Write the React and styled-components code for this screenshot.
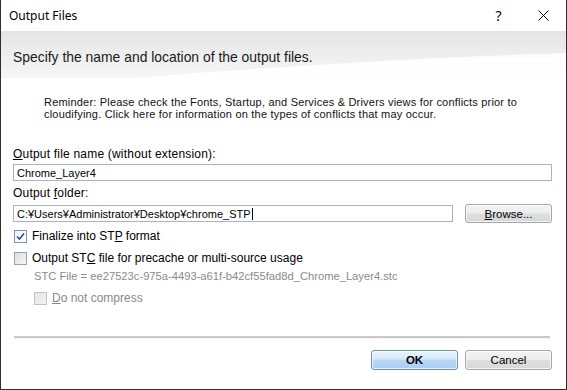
import styled, { createGlobalStyle } from "styled-components";

const Global = createGlobalStyle`
  html, body {
    margin: 0;
    padding: 0;
    background: #ffffff;
  }
  body {
    font-family: "Liberation Sans", Arial, sans-serif;
    font-size: 12px;
    color: #000;
  }
`;

const Window = styled.div`
  width: 567px;
  height: 390px;
  box-sizing: border-box;
  border: 1px solid #2e2e2e;
  border-top: none;
  background: #fff;
  display: flex;
  flex-direction: column;
`;

const TitleBar = styled.div`
  height: 31px;
  display: flex;
  align-items: center;
  padding-left: 8px;
  background: #fff;
  font-family: "Noto Sans", "Open Sans", sans-serif;
  font-size: 12px;
  color: #000;
`;

const Title = styled.div`
  flex: 1;
`;

const TitleButton = styled.div`
  width: 45px;
  height: 31px;
  display: flex;
  align-items: center;
  justify-content: center;
  font-size: 14px;
`;

const Header = styled.div`
  height: 47px;
  box-sizing: border-box;
  padding: 4px 0 0 12px;
  display: flex;
  align-items: center;
  position: relative;
  overflow: hidden;
  background: linear-gradient(to bottom, #e4e4e4 0%, #ececec 40%, #f6f6f6 100%);
  font-family: "Liberation Sans", Arial, sans-serif;
  font-size: 13.9px;
  color: #1a1a1a;
`;

const Swoosh = styled.svg`
  position: absolute;
  left: 0;
  top: 0;
  width: 565px;
  height: 70px;
`;

const HeaderText = styled.span`
  position: relative;
`;

const Body = styled.div`
  flex: 1;
  display: flex;
  flex-direction: column;
  padding: 0 14px 0 12px;
`;

const Reminder = styled.div`
  margin: 18px 0 0 31px;
  width: 500px;
  font-size: 11px;
  line-height: 12px;
  color: #111;
  letter-spacing: 0.2px;
`;

const Label = styled.div`
  margin-top: ${(p) => p.$top || 0}px;
  line-height: 14px;
  letter-spacing: 0.2px;
  color: #000;
`;

const Key = styled.span`
  text-decoration: underline;
`;

const Row = styled.div`
  display: flex;
  align-items: center;
  gap: 12px;
  margin-top: ${(p) => p.$top || 0}px;
`;

const TextInput = styled.div`
  flex: ${(p) => (p.$grow ? "1 1 auto" : "none")};
  height: 17px;
  box-sizing: border-box;
  border: 1px solid #a7b4c8;
  padding: 0 3px;
  display: flex;
  align-items: center;
  font-size: 11px;
  color: #000;
  background: #fff;
  margin-top: ${(p) => p.$top || 0}px;
`;

const Caret = styled.span`
  display: inline-block;
  width: 1px;
  height: 12px;
  background: #000;
  margin-left: 1px;
`;

const Button = styled.div`
  width: ${(p) => p.$width || 87}px;
  height: ${(p) => p.$height || 20}px;
  flex: none;
  box-sizing: border-box;
  border: 1px solid ${(p) => (p.$primary ? "#6f8fb7" : "#a6a6a6")};
  border-radius: 3px;
  display: flex;
  align-items: center;
  justify-content: center;
  font-size: 11.5px;
  font-weight: ${(p) => (p.$primary ? 700 : 400)};
  color: #000;
  background: ${(p) =>
    p.$primary
      ? "linear-gradient(to bottom, #eaf4fd 0%, #d6eafb 45%, #b7d7f4 50%, #a9cff1 100%)"
      : "linear-gradient(to bottom, #f4f4f4 0%, #ececec 48%, #dedede 52%, #d4d8dd 100%)"};
  box-shadow: inset 0 0 0 1px rgba(255, 255, 255, 0.7);
`;

const CheckRow = styled.div`
  display: flex;
  align-items: center;
  gap: 5px;
  margin-top: ${(p) => p.$top || 0}px;
  margin-left: ${(p) => p.$indent || 1}px;
  color: ${(p) => (p.$disabled ? "#8a8a8a" : "#000")};
  line-height: 14px;
`;

const Box = styled.span`
  width: 13px;
  height: 13px;
  box-sizing: border-box;
  border: 1px solid ${(p) => (p.$disabled ? "#c2c2c2" : p.$checked ? "#7a93b8" : "#9aa3ae")};
  background: ${(p) =>
    p.$disabled
      ? "linear-gradient(135deg, #e6e6e6, #f2f2f2)"
      : p.$checked
      ? "linear-gradient(135deg, #f0f3f8, #ffffff)"
      : "linear-gradient(135deg, #d9dde3, #f7f8fa)"};
  display: flex;
  align-items: center;
  justify-content: center;
`;

const StcLine = styled.div`
  margin: 4px 0 0 21px;
  color: #8a8a8a;
  font-size: 11.2px;
  line-height: 14px;
`;

const Spacer = styled.div`
  flex: 1;
`;

const Separator = styled.div`
  height: 2px;
  background: #c8c8c8;
  border-bottom: 1px solid #f4f4f4;
  margin: 0 2px 0 1px;
`;

const Footer = styled.div`
  display: flex;
  justify-content: flex-end;
  gap: 7px;
  padding: 11px 0 19px;
`;

const Check = () => (
  <svg width="9" height="9" viewBox="0 0 9 9">
    <path d="M1 4.5 L3.5 7 L8 1.5" fill="none" stroke="#2b4f8c" strokeWidth="1.6" />
  </svg>
);

const App = () => {
  return (
    <>
      <Global />
      <Window>
        <TitleBar>
          <Title>Output Files</Title>
          <TitleButton>?</TitleButton>
          <TitleButton>
            <svg width="11" height="11" viewBox="0 0 11 11">
              <path d="M0.5 0.5 L10.5 10.5 M10.5 0.5 L0.5 10.5" stroke="#000" strokeWidth="1" />
            </svg>
          </TitleButton>
        </TitleBar>
        <Header>
          <Swoosh viewBox="0 0 565 70" preserveAspectRatio="none">
            <path d="M0 70 C120 48 300 30 565 22 L565 70 Z" fill="#ffffff" opacity="0.85" />
            <path d="M0 64 C140 44 320 32 565 28" fill="none" stroke="#ffffff" strokeWidth="3" />
          </Swoosh>
          <HeaderText>Specify the name and location of the output files.</HeaderText>
        </Header>
        <Body>
          <Reminder>
            Reminder: Please check the Fonts, Startup, and Services &amp; Drivers views for conflicts prior to
            cloudifying. Click here for information on the types of conflicts that may occur.
          </Reminder>
          <Label $top={27}>
            <Key>O</Key>utput file name (without extension):
          </Label>
          <TextInput $top={3}>Chrome_Layer4</TextInput>
          <Label $top={5}>
            Output <Key>f</Key>older:
          </Label>
          <Row $top={4}>
            <TextInput $grow>
              C:¥Users¥Administrator¥Desktop¥chrome_STP
              <Caret />
            </TextInput>
            <Button $width={87} $height={19}>
              <span>
                <Key>B</Key>rowse...
              </span>
            </Button>
          </Row>
          <CheckRow $top={6}>
            <Box $checked>
              <Check />
            </Box>
            <span>
              Finalize into ST<Key>P</Key> format
            </span>
          </CheckRow>
          <CheckRow $top={8}>
            <Box />
            <span>
              Output ST<Key>C</Key> file for precache or multi-source usage
            </span>
          </CheckRow>
          <StcLine>STC File = ee27523c-975a-4493-a61f-b42cf55fad8d_Chrome_Layer4.stc</StcLine>
          <CheckRow $top={8} $indent={21} $disabled>
            <Box $disabled />
            <span>
              <Key>D</Key>o not compress
            </span>
          </CheckRow>
          <Spacer />
          <Separator />
          <Footer>
            <Button $primary>OK</Button>
            <Button>Cancel</Button>
          </Footer>
        </Body>
      </Window>
    </>
  );
};

export default App;
